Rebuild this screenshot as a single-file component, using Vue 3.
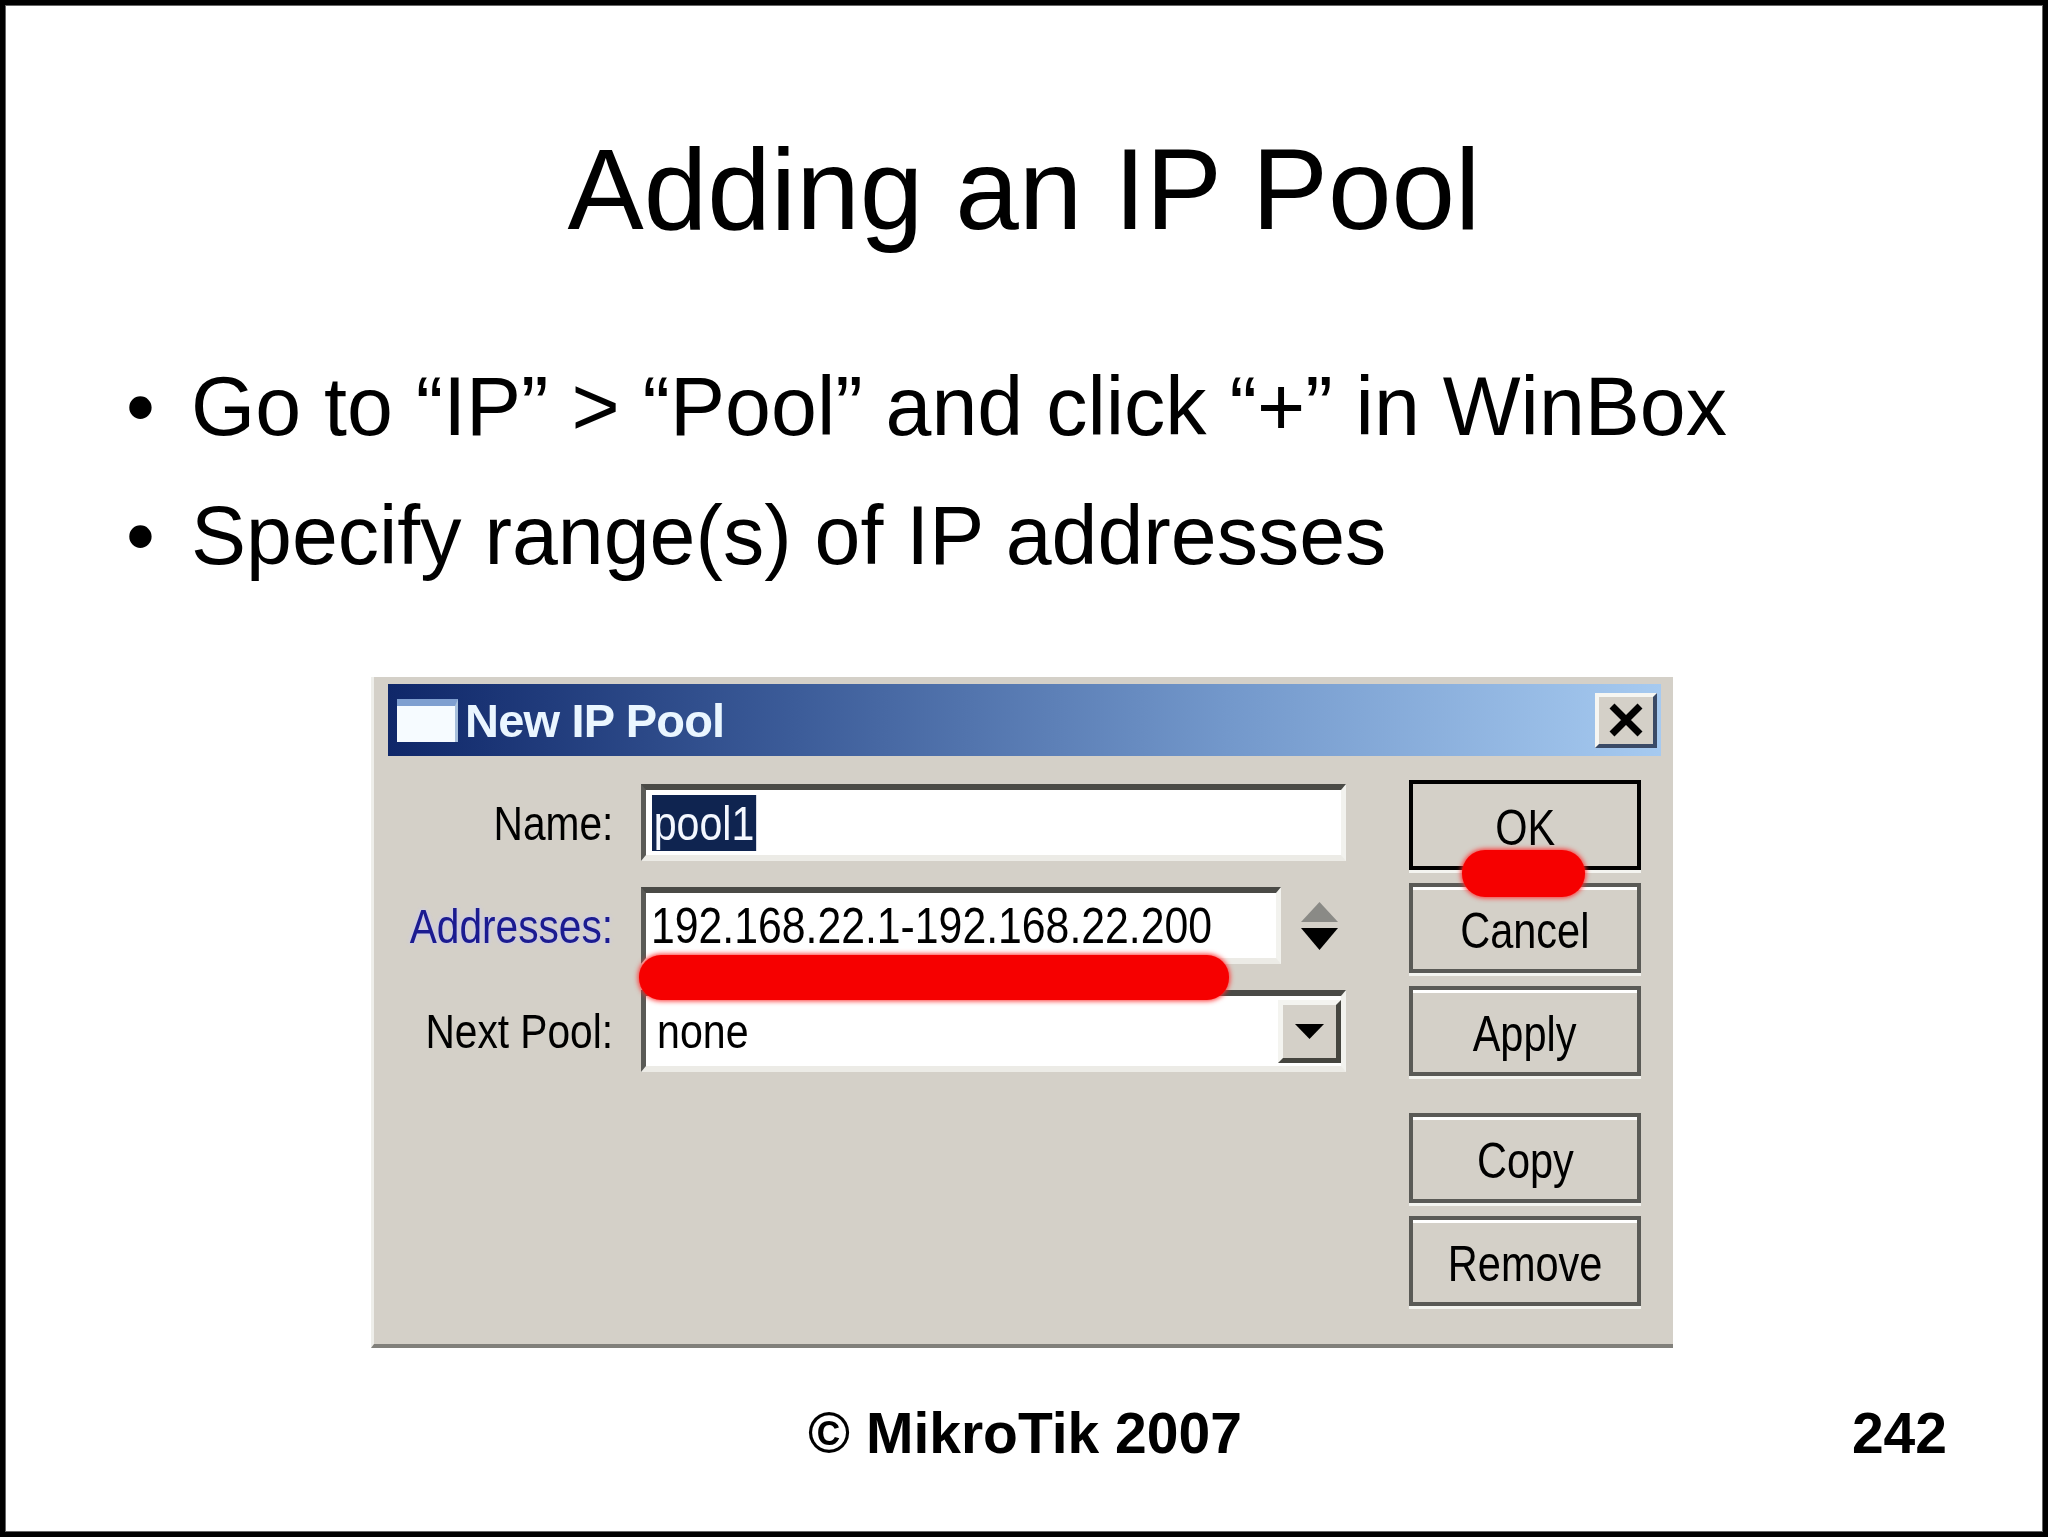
<script setup>
const bullets = ['Go to “IP” > “Pool” and click “+” in WinBox', 'Specify range(s) of IP addresses']
const topButtons = [
  { label: 'OK', cls: 'default' },
  { label: 'Cancel', cls: '' },
  { label: 'Apply', cls: '' },
]
const lowerButtons = ['Copy', 'Remove']
</script>

<template>
  <div class="slide">
    <h1 class="title">Adding an IP Pool</h1>
    <ul class="bullets">
      <li v-for="b in bullets" :key="b"><span class="dot">•</span><span>{{ b }}</span></li>
    </ul>

    <section class="dialog">
      <header class="titlebar">
        <span class="winicon"></span>
        <span class="wintitle">New IP Pool</span>
        <button class="close" aria-label="Close">
          <svg viewBox="0 0 36 36" width="36" height="36">
            <path d="M4 4 L32 32 M32 4 L4 32" stroke="#000" stroke-width="7" fill="none" />
          </svg>
        </button>
      </header>

      <div class="body">
        <div class="form">
          <div class="row">
            <label class="lbl"><span>Name:</span></label>
            <div class="field"><span class="val selected"><span>pool1</span></span></div>
          </div>
          <div class="row">
            <label class="lbl blue"><span>Addresses:</span></label>
            <div class="field short"><span class="val addr">192.168.22.1-192.168.22.200</span></div>
            <div class="spinner">
              <svg viewBox="0 0 37 48" width="37" height="48">
                <path d="M18.5 0 L37 20 H0 Z" fill="#8a8a86" />
                <path d="M0 26 H37 L18.5 48 Z" fill="#000" />
              </svg>
            </div>
          </div>
          <div class="row tall">
            <label class="lbl"><span>Next Pool:</span></label>
            <div class="field"><span class="val none">none</span>
              <span class="drop">
                <svg viewBox="0 0 29 15" width="29" height="15"><path d="M0 0 H29 L14.5 15 Z" fill="#000" /></svg>
              </span>
            </div>
          </div>
        </div>

        <div class="buttons">
          <div class="group">
            <button v-for="b in topButtons" :key="b.label" class="btn" :class="b.cls"><span>{{ b.label }}</span></button>
          </div>
          <div class="group">
            <button v-for="b in lowerButtons" :key="b" class="btn"><span>{{ b }}</span></button>
          </div>
        </div>
      </div>

      <span class="mark mark-bar"></span>
      <span class="mark mark-dot"></span>
    </section>

    <footer class="footer">
      <span></span>
      <span class="copy">© MikroTik 2007</span>
      <span class="num">242</span>
    </footer>
  </div>
</template>

<style scoped>
.slide {
  width: 2048px;
  height: 1537px;
  box-sizing: border-box;
  border: 5px solid #000;
  box-shadow: inset 0 0 0 1px #666;
  background: #fff;
  color: #000;
  font-family: "Liberation Sans", Arial, sans-serif;
  overflow: hidden;
}
.title {
  margin: 120px 0 0;
  font-size: 114.3px;
  line-height: 130px;
  font-weight: 400;
  text-align: center;
}
.bullets {
  list-style: none;
  margin: 87px 0 0;
  padding: 0 0 0 121px;
  font-size: 82.5px;
  line-height: 129px;
}
.bullets li {
  display: flex;
}
.dot {
  width: 65px;
}
.dialog {
  position: relative;
  box-sizing: border-box;
  width: 1302px;
  height: 671px;
  margin: 77px 0 0 366px;
  padding: 7px 12px 0 14px;
  background: #d4d0c8;
  border-left: 3px solid #eeeeea;
  border-bottom: 4px solid #81807b;
  filter: blur(0.45px);
}
.titlebar {
  display: flex;
  align-items: center;
  height: 72px;
  background: linear-gradient(90deg, #0f2769 0%, #3c5c99 32%, #7398cb 66%, #a6caf0 100%);
}
.winicon {
  box-sizing: border-box;
  width: 61px;
  height: 43px;
  margin-left: 9px;
  background: #f6fbff;
  border-top: 7px solid #7f9fd0;
  border-right: 3px solid #a8c0dc;
}
.wintitle {
  margin-left: 7px;
  font-size: 47px;
  font-weight: 700;
  letter-spacing: -0.8px;
  color: #eaf6ff;
}
.close {
  box-sizing: border-box;
  display: flex;
  align-items: center;
  justify-content: center;
  width: 62px;
  height: 55px;
  margin-left: auto;
  margin-right: 4px;
  padding: 0;
  background: #d4d0c8;
  border: 4px solid;
  border-color: #f6f6f2 #3a4a66 #3a4a66 #f6f6f2;
}
.body {
  display: flex;
  align-items: flex-start;
  padding-top: 24px;
}
.form {
  display: flex;
  flex-direction: column;
  gap: 26px;
  margin-top: 4px;
}
.row {
  display: flex;
  align-items: center;
  height: 77px;
}
.row.tall {
  height: 82px;
}
.lbl {
  display: flex;
  justify-content: flex-end;
  width: 225px;
  margin-right: 28px;
  font-size: 49px;
  white-space: nowrap;
}
.lbl span {
  display: inline-block;
  transform: scaleX(0.83);
  transform-origin: right center;
}
.lbl.blue {
  color: #1b1b90;
}
.lbl.blue span {
  text-shadow: 0 0 5px #c8c8ff;
}
.field {
  box-sizing: border-box;
  position: relative;
  display: flex;
  align-items: center;
  width: 705px;
  height: 100%;
  background: #fff;
  border-style: solid;
  border-width: 6px 5px 6px 5px;
  border-color: #4a4a46 #f2f2ee #ecebe6 #5a5a56;
}
.field.short {
  width: 640px;
}
.val {
  display: inline-block;
  font-size: 49px;
  line-height: 56px;
  white-space: nowrap;
  transform-origin: left center;
  transform: scaleX(0.84);
}
.val.selected {
  margin-left: 6px;
  padding: 0 2px;
  background: #0f2450;
  color: #f4f8ff;
}
.val.addr {
  margin-left: 5px;
  font-size: 50px;
  transform: scaleX(0.855);
}
.val.none {
  margin-left: 11px;
}
.drop {
  box-sizing: border-box;
  position: absolute;
  right: 0;
  top: 4px;
  display: flex;
  align-items: center;
  justify-content: center;
  width: 63px;
  height: 63px;
  background: #d4d0c8;
  border: 5px solid;
  border-color: #f4f4f0 #45453f #45453f #f4f4f0;
}
.spinner {
  display: flex;
  margin-left: 20px;
}
.buttons {
  display: flex;
  flex-direction: column;
  gap: 37px;
  margin-left: 63px;
}
.group {
  display: flex;
  flex-direction: column;
  gap: 13px;
}
.btn {
  box-sizing: border-box;
  width: 232px;
  height: 90px;
  padding: 5px 0 0;
  background: #d4d0c8;
  border: 4px solid #5a5a56;
  box-shadow: inset 0 3px 0 #fff, 0 3px 0 #f4f4f0;
  color: #000;
  font-family: inherit;
  font-size: 50px;
}
.btn span {
  display: inline-block;
  transform: scaleX(0.83);
}
.btn.default {
  border-color: #000;
  box-shadow: 0 3px 0 #f4f4f0;
}
.mark {
  position: absolute;
  background: #f60000;
  box-shadow: 0 0 5px 1px #ff3030;
}
.mark-bar {
  left: 265px;
  top: 278px;
  width: 590px;
  height: 45px;
  border-radius: 22px;
}
.mark-dot {
  left: 1088px;
  top: 173px;
  width: 123px;
  height: 47px;
  border-radius: 23px;
}
.footer {
  display: grid;
  grid-template-columns: 1fr auto 1fr;
  margin-top: 50px;
  padding: 0 96px 0 98px;
  font-size: 57px;
  line-height: 70px;
  font-weight: 700;
}
.num {
  justify-self: end;
}
</style>
